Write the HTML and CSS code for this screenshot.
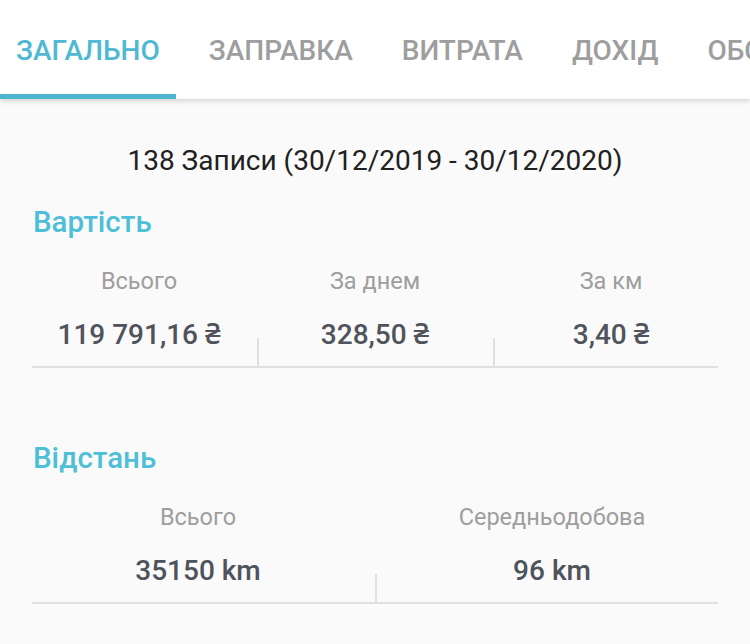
FILE: index.html
```html
<!DOCTYPE html>
<html lang="uk">
<head>
<meta charset="utf-8">
<title>Статистика</title>
<link rel="stylesheet" href="styles.css">
</head>
<body>
<header class="tabbar">
  <nav class="tabs">
    <div class="tab active">ЗАГАЛЬНО<span class="indicator"></span></div>
    <div class="tab">ЗАПРАВКА</div>
    <div class="tab">ВИТРАТА</div>
    <div class="tab">ДОХІД</div>
    <div class="tab">ОБСЛУГОВУВАННЯ</div>
  </nav>
</header>
<main class="content">
  <p class="summary">138 Записи (30/12/2019 - 30/12/2020)</p>

  <section class="block">
    <h2 class="block-title">Вартість</h2>
    <div class="stats stats-3">
      <div class="cell">
        <div class="label">Всього</div>
        <div class="value">119 791,16 ₴</div>
      </div>
      <div class="cell sep">
        <div class="label">За днем</div>
        <div class="value">328,50 ₴</div>
      </div>
      <div class="cell sep">
        <div class="label">За км</div>
        <div class="value">3,40 ₴</div>
      </div>
    </div>
    <div class="rule"></div>
  </section>

  <section class="block block-second">
    <h2 class="block-title">Відстань</h2>
    <div class="stats stats-2">
      <div class="cell">
        <div class="label">Всього</div>
        <div class="value">35150 km</div>
      </div>
      <div class="cell sep">
        <div class="label">Середньодобова</div>
        <div class="value">96 km</div>
      </div>
    </div>
    <div class="rule"></div>
  </section>
</main>
</body>
</html>
```

FILE: styles.css
```css
html, body {
  margin: 0;
  padding: 0;
}
body {
  width: 750px;
  height: 644px;
  overflow: hidden;
  background: #fafafa;
  font-family: Roboto, "Noto Sans", sans-serif;
}
.tabbar {
  background: #ffffff;
  height: 99px;
  box-shadow: 0 2px 5px rgba(0, 0, 0, 0.16);
  position: relative;
  z-index: 1;
  overflow: hidden;
}
.tabs {
  display: flex;
  height: 99px;
  align-items: stretch;
  padding-left: 16px;
  gap: 49px;
  white-space: nowrap;
}
.tab {
  position: relative;
  display: flex;
  align-items: center;
  font-size: 28px;
  font-weight: 500;
  color: #9e9e9e;
  line-height: 1;
  padding-top: 2px;
}
.tab.active {
  color: #4fb9d3;
}
.indicator {
  position: absolute;
  left: -16px;
  bottom: 0;
  width: 176px;
  height: 5px;
  background: #4db6ce;
}
.content {
  padding: 0 21px;
}
.summary {
  margin: 0;
  padding-top: 45px;
  text-align: center;
  font-size: 28px;
  line-height: 34px;
  color: #212121;
}
.block-title {
  margin: 27px 0 0 12px;
  font-size: 29.5px;
  font-weight: 500;
  line-height: 34px;
  color: #4fbfd8;
}
.block-second .block-title {
  margin-top: 73px;
}
.stats {
  display: grid;
  margin-top: 28px;
}
.stats-3 {
  grid-template-columns: repeat(3, 1fr);
}
.stats-2 {
  grid-template-columns: repeat(2, 1fr);
}
.cell {
  position: relative;
  text-align: center;
  padding-bottom: 15px;
}
.sep::before {
  content: "";
  position: absolute;
  left: 0;
  bottom: 0;
  width: 2px;
  height: 28px;
  background: #e0e0e0;
}
.label {
  font-size: 23.5px;
  line-height: 28px;
  color: #9e9e9e;
}
.value {
  margin-top: 24px;
  font-size: 28px;
  font-weight: 500;
  line-height: 32px;
  color: #4f535b;
}
.rule {
  margin: 0 11px;
  height: 2px;
  background: #e0e0e0;
}
```
